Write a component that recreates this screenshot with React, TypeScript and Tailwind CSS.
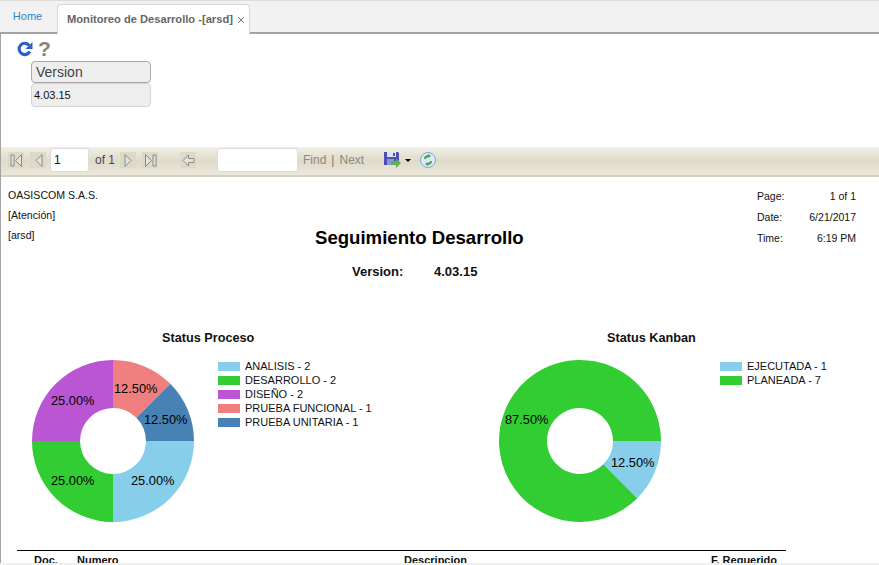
import { X } from 'lucide-react';

const sans = 'font-["Liberation_Sans",Arial,sans-serif]';

type Slice = { from: number; to: number; color: string };

// angles in degrees, clockwise from 3 o'clock
const arcPath = (s: Slice, cx: number, cy: number, r: number, inner: number) => {
  const rad = (a: number) => (a * Math.PI) / 180;
  const large = s.to - s.from > 180 ? 1 : 0;
  const p = (radius: number, a: number) =>
    `${(cx + radius * Math.cos(rad(a))).toFixed(2)} ${(cy + radius * Math.sin(rad(a))).toFixed(2)}`;
  return `M${p(r, s.from)} A${r} ${r} 0 ${large} 1 ${p(r, s.to)} L${p(inner, s.to)} A${inner} ${inner} 0 ${large} 0 ${p(inner, s.from)} Z`;
};

const Donut = ({
  slices,
  labels,
}: {
  slices: Slice[];
  labels: { text: string; x: number; y: number }[];
}) => (
  <svg width="166" height="166" viewBox="0 0 166 166" className="shrink-0">
    {slices.map((s) => (
      <path key={s.from} d={arcPath(s, 83, 83, 81, 33)} fill={s.color} />
    ))}
    {labels.map((l) => (
      <text key={l.text + l.x} x={l.x} y={l.y} fontSize="12.8" fill="#000" fontFamily="'Liberation Sans', Arial, sans-serif">
        {l.text}
      </text>
    ))}
  </svg>
);

const Legend = ({ items }: { items: { color: string; text: string }[] }) => (
  <ul className="flex flex-col gap-[1px] mt-[2px] text-[11px] leading-[13px] text-[#111]">
    {items.map((i) => (
      <li key={i.text} className="flex items-center gap-[5px]">
        <span className="w-[22px] h-[9px]" style={{ backgroundColor: i.color }} />
        <span>{i.text}</span>
      </li>
    ))}
  </ul>
);

const NavBtn = ({ d }: { d: string }) => (
  <span className="w-4 h-4 bg-[#dcd9c9] flex items-center justify-center">
    <svg width="15" height="15" viewBox="0 0 15 15" fill="#e4e3da" stroke="#8c8c84" strokeWidth="1">
      <path d={d} />
    </svg>
  </span>
);

const App = () => {
  return (
    <div className={`${sans} w-[879px] h-[565px] overflow-hidden bg-white flex flex-col relative`}>
      {/* tabs */}
      <div className="h-[34px] shrink-0 bg-[#f2f2f2] border-t border-[#dcdcdc] border-b-2 border-b-[#a3a3a3] flex items-end pl-[2px]">
        <a className="text-[#2a86c8] text-[11px] w-[55px] h-[30px] flex items-center justify-center pr-[4px] pb-[1px]">Home</a>
        <div className="h-[30px] -mb-[2px] w-[193px] bg-white border border-b-0 border-[#d6d6d6] rounded-t-[4px] flex items-center pl-[9px] gap-[3px] font-bold text-[#666]">
          <span className="text-[11.15px] whitespace-nowrap">Monitoreo de Desarrollo -[arsd]</span>
          <X size={10} strokeWidth={2.5} className="text-[#5f7690]" />
        </div>
      </div>

      <div className="flex-1 flex flex-col border-l border-[#a3a3a3] min-h-0">
        {/* filter panel */}
        <div className="h-[113px] shrink-0 pl-[16px] pt-[5px]">
          <div className="flex items-center gap-[5px] h-[19px]">
            <svg width="16" height="16" viewBox="0 0 17 17">
              <path d="M13.6 11.2A6 6 0 1 1 13 4.7" fill="none" stroke="#2c62c4" strokeWidth="3.4" />
              <path d="M16.5 1v7.5h-7.5z" fill="#2c62c4" />
            </svg>
            <span className="text-[21px] leading-[19px] font-bold text-[#858585]">?</span>
          </div>
          <div className="ml-[14px] mt-[3px] w-[120px]">
            <div className="h-[22px] bg-[#eeeeee] border border-[#a8a8a8] rounded-[4px] pl-[4px] text-[14px] leading-[20px] text-[#444]">
              Version
            </div>
            <div className="h-[24px] bg-[#eeeeee] border border-[#d4d4d4] rounded-[4px] pl-[2px] text-[11px] leading-[22px] text-[#111]">
              4.03.15
            </div>
          </div>
        </div>

        {/* report toolbar */}
        <div className="h-[30px] shrink-0 border-b-2 border-[#d4d1c4] bg-gradient-to-b from-[#f2f0e6] via-[#dedbc9] to-[#ece9dc] flex items-center pl-[7px] pb-[2px] text-[12px] text-[#6a6a5a]">
          <div className="flex gap-[6px]">
            <NavBtn d="M2 2h3v11H2zM12.5 1.5L6.5 7.5l6 6z" />
            <NavBtn d="M11 1.5L5 7.5l6 6z" />
          </div>
          <span className="ml-[4px] w-[39px] h-[24px] bg-white border border-[#dcdcdc] rounded-[3px] pl-[3px] text-[12px] leading-[22px] text-[#111]">1</span>
          <span className="ml-[6px] text-[#5b3b5b]">of 1</span>
          <div className="flex gap-[6px] ml-[5px]">
            <NavBtn d="M4 1.5l6 6-6 6z" />
            <NavBtn d="M2.5 1.5l6 6-6 6zM10 2h3v11h-3z" />
          </div>
          <div className="ml-[22px]">
            <NavBtn d="M13 5.5v4H7.5v3.5L2 7.5 7.5 2v3.5z" />
          </div>
          <span className="ml-[21px] w-[81px] h-[24px] bg-white border border-[#dcdcdc] rounded-[3px]" />
          <span className="ml-[5px] text-[#8b8b7a]">Find</span>
          <span className="mx-[5px] text-[#777]">|</span>
          <span className="text-[#8b8b7a]">Next</span>
          <svg width="18" height="18" viewBox="0 0 18 18" className="ml-[20px]">
            <path d="M0 1h14l1 1v12H0z" fill="#4a50b4" />
            <path d="M3 1h9v5H3z" fill="#dfe4f2" />
            <path d="M9 2h2v3H9z" fill="#4a50b4" />
            <path d="M3 8h7v6H3z" fill="#8f96d6" />
            <path d="M7 10h5V7.5l5 4.5-5 5v-3H7z" fill="#5fb04e" />
          </svg>
          <span className="ml-[3px] w-0 h-0 border-x-[3px] border-x-transparent border-t-[3px] border-t-black" />
          <span className="ml-[9px] w-4 h-4 rounded-full bg-[#dbe8f6] border border-[#7ea6d6] flex items-center justify-center">
            <svg width="12" height="12" viewBox="0 0 12 12" fill="none" stroke="#3fa53f" strokeWidth="2">
              <path d="M3 5c0-2 2-3 4-3M9 7c0 2-2 3-4 3" />
              <path d="M6 0l3 2-3 2zM6 8l-3 2 3 2z" fill="#3fa53f" stroke="none" />
            </svg>
          </span>
        </div>

        {/* report */}
        <div className="flex-1 min-h-0 relative overflow-hidden text-[#111]">
          <div className="flex justify-between h-[94px]">
            <div className="pl-[7px] pt-[8px] text-[10.6px] leading-[20px] w-[140px]">
              <div>OASISCOM S.A.S.</div>
              <div>[Atención]</div>
              <div>[arsd]</div>
            </div>
            <div className="flex-1 pt-[50px] pl-[174px]">
              <h1 className="text-[18.6px] leading-[22px] font-bold text-black whitespace-nowrap">Seguimiento Desarrollo</h1>
            </div>
            <div className="w-[122px] pt-[9px] text-[10.5px] leading-[21px]">
              <div className="flex w-[99px] justify-between"><span>Page:</span><span>1 of 1</span></div>
              <div className="flex w-[99px] justify-between"><span>Date:</span><span>6/21/2017</span></div>
              <div className="flex w-[99px] justify-between"><span>Time:</span><span>6:19 PM</span></div>
            </div>
          </div>

          <div className="flex text-[13px] font-bold leading-[14px] text-[#111] pl-[351px] -mt-[6px] h-[63px]">
            <span className="w-[82px]">Version:</span>
            <span>4.03.15</span>
          </div>

          <div className="flex h-[222px]">
            <section className="w-[467px] shrink-0 pl-[29px]">
              <h2 className="pl-[132px] text-[12.7px] font-bold leading-[14px] text-[#111] whitespace-nowrap mt-[3px]">Status Proceso</h2>
              <div className="flex gap-[22px] mt-[13px]">
                <Donut
                  slices={[
                    { from: 0, to: 90, color: '#87ceeb' },
                    { from: 90, to: 180, color: '#32cd32' },
                    { from: 180, to: 270, color: '#ba55d3' },
                    { from: 270, to: 315, color: '#f08080' },
                    { from: 315, to: 360, color: '#4682b4' },
                  ]}
                  labels={[
                    { text: '12.50%', x: 84, y: 35 },
                    { text: '12.50%', x: 114, y: 66 },
                    { text: '25.00%', x: 21, y: 47 },
                    { text: '25.00%', x: 21, y: 127 },
                    { text: '25.00%', x: 101, y: 127 },
                  ]}
                />
                <Legend
                  items={[
                    { color: '#87ceeb', text: 'ANALISIS - 2' },
                    { color: '#32cd32', text: 'DESARROLLO - 2' },
                    { color: '#ba55d3', text: 'DISEÑO - 2' },
                    { color: '#f08080', text: 'PRUEBA FUNCIONAL - 1' },
                    { color: '#4682b4', text: 'PRUEBA UNITARIA - 1' },
                  ]}
                />
              </div>
            </section>
            <section className="flex-1 pl-[29px]">
              <h2 className="pl-[110px] text-[12.7px] font-bold leading-[14px] text-[#111] whitespace-nowrap mt-[3px]">Status Kanban</h2>
              <div className="flex gap-[57px] mt-[13px]">
                <Donut
                  slices={[
                    { from: 0, to: 45, color: '#87ceeb' },
                    { from: 45, to: 360, color: '#32cd32' },
                  ]}
                  labels={[
                    { text: '87.50%', x: 8, y: 66 },
                    { text: '12.50%', x: 114, y: 109 },
                  ]}
                />
                <Legend
                  items={[
                    { color: '#87ceeb', text: 'EJECUTADA - 1' },
                    { color: '#32cd32', text: 'PLANEADA - 7' },
                  ]}
                />
              </div>
            </section>
          </div>

          <div className="ml-[16px] w-[769px] border-t border-black h-[14px] flex text-[11px] font-bold leading-[18px] text-[#111]">
            <span className="ml-[17px] w-[43px]">Doc.</span>
            <span className="w-[327px]">Numero</span>
            <span className="w-[307px]">Descripcion</span>
            <span>F. Requerido</span>
          </div>
        </div>
      </div>
      <div className="h-[2px] shrink-0 bg-[#f0f0f0]" />
    </div>
  );
};

export default App;
